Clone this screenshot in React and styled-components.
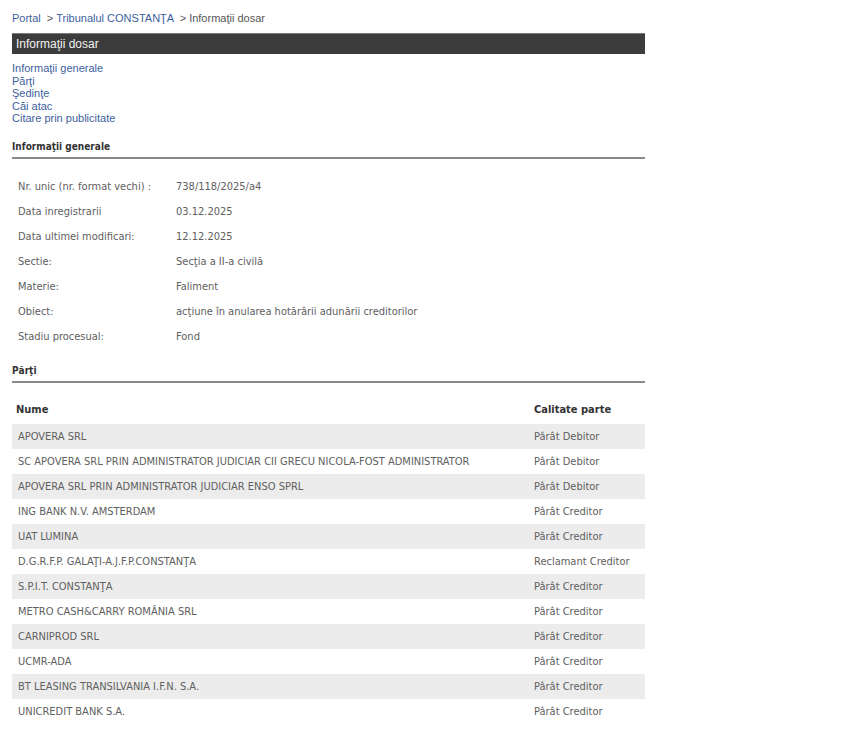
import React from 'react';
import styled, { createGlobalStyle } from 'styled-components';

const GlobalStyle = createGlobalStyle`
  body {
    margin: 0;
    background: #fff;
    font-family: "Liberation Sans", Arial, sans-serif;
  }
`
const PageStyled = styled.div`
  width: 633px;
  padding: 11px 12px 12px 12px;
`
const BreadcrumbStyled = styled.div`
  font-size: 11px;
  line-height: 14px;
  color: #555;
  white-space: pre;
`
const CrumbLinkStyled = styled.a`
  color: #3d5f9e;
  text-decoration: none;
`
const TitleBarStyled = styled.div`
  margin-top: 8px;
  height: 21px;
  line-height: 20px;
  background: #3c3c3c;
  border-top: 1px solid #7a7a7a;
  box-sizing: border-box;
  color: #f2f2f2;
  font-size: 12px;
  padding-left: 4px;
`
const LinkListStyled = styled.div`
  margin-top: 8px;
  display: flex;
  flex-direction: column;
`
const NavLinkStyled = styled.a`
  font-size: 11px;
  line-height: 12.5px;
  color: #3d5f9e;
  text-decoration: none;
`
const SectionTitleStyled = styled.div`
  margin-top: ${(p) => p.$top}px;
  font-family: "DejaVu Sans Condensed", "DejaVu Sans", sans-serif;
  font-weight: bold;
  font-size: 10px;
  line-height: 14px;
  color: #333;
  padding-bottom: 3px;
  border-bottom: 2px solid #8a8a8a;
`
const TableStyled = styled.table`
  margin-top: ${(p) => p.$top}px;
  width: 100%;
  border-collapse: collapse;
  font-family: "DejaVu Sans Condensed", "DejaVu Sans", sans-serif;
  font-size: 11px;
  color: #606060;
`
const CellStyled = styled.td`
  height: 25px;
  padding: 0 6px;
  vertical-align: middle;
  width: ${(p) => p.$width || 'auto'};
  white-space: nowrap;
`
const HeadCellStyled = styled.th`
  height: 25px;
  padding: 1px 4px 2px ${(p) => p.$left || 4}px;
  text-align: left;
  font-weight: bold;
  color: #333;
  vertical-align: middle;
  width: ${(p) => p.$width || 'auto'};
`
const StripeRowStyled = styled.tr`
  background: ${(p) => (p.$odd ? '#ececec' : '#fff')};
`

const info = [
  ['Nr. unic (nr. format vechi) :', '738/118/2025/a4'],
  ['Data inregistrarii', '03.12.2025'],
  ['Data ultimei modificari:', '12.12.2025'],
  ['Sectie:', 'Secţia a II-a civilă'],
  ['Materie:', 'Faliment'],
  ['Obiect:', 'acţiune în anularea hotărârii adunării creditorilor'],
  ['Stadiu procesual:', 'Fond'],
]

const parti = [
  ['APOVERA SRL', 'Pârât Debitor'],
  ['SC APOVERA SRL PRIN ADMINISTRATOR JUDICIAR CII GRECU NICOLA-FOST ADMINISTRATOR', 'Pârât Debitor'],
  ['APOVERA SRL PRIN ADMINISTRATOR JUDICIAR ENSO SPRL', 'Pârât Debitor'],
  ['ING BANK N.V. AMSTERDAM', 'Pârât Creditor'],
  ['UAT LUMINA', 'Pârât Creditor'],
  ['D.G.R.F.P. GALAŢI-A.J.F.P.CONSTANŢA', 'Reclamant Creditor'],
  ['S.P.I.T. CONSTANŢA', 'Pârât Creditor'],
  ['METRO CASH&CARRY ROMÂNIA SRL', 'Pârât Creditor'],
  ['CARNIPROD SRL', 'Pârât Creditor'],
  ['UCMR-ADA', 'Pârât Creditor'],
  ['BT LEASING TRANSILVANIA I.F.N. S.A.', 'Pârât Creditor'],
  ['UNICREDIT BANK S.A.', 'Pârât Creditor'],
]

const App = () => {
  return (
    <>
      <GlobalStyle />
      <PageStyled>
        <BreadcrumbStyled>
          <CrumbLinkStyled href="#">Portal</CrumbLinkStyled>{'  > '}
          <CrumbLinkStyled href="#">Tribunalul CONSTANŢA</CrumbLinkStyled>{'  > '}
          Informaţii dosar
        </BreadcrumbStyled>
        <TitleBarStyled>Informaţii dosar</TitleBarStyled>
        <LinkListStyled>
          <NavLinkStyled href="#">Informaţii generale</NavLinkStyled>
          <NavLinkStyled href="#">Părţi</NavLinkStyled>
          <NavLinkStyled href="#">Şedinţe</NavLinkStyled>
          <NavLinkStyled href="#">Căi atac</NavLinkStyled>
          <NavLinkStyled href="#">Citare prin publicitate</NavLinkStyled>
        </LinkListStyled>

        <SectionTitleStyled $top={15}>Informaţii generale</SectionTitleStyled>
        <TableStyled $top={15}>
          <tbody>
            {info.map(([label, value]) => (
              <tr key={label}>
                <CellStyled $width="146px">{label}</CellStyled>
                <CellStyled>{value}</CellStyled>
              </tr>
            ))}
          </tbody>
        </TableStyled>

        <SectionTitleStyled $top={15}>Părţi</SectionTitleStyled>
        <TableStyled $top={13}>
          <thead>
            <tr>
              <HeadCellStyled>Nume</HeadCellStyled>
              <HeadCellStyled $width="105px" $left={6}>Calitate parte</HeadCellStyled>
            </tr>
          </thead>
          <tbody>
            {parti.map(([name, role], i) => (
              <StripeRowStyled key={name} $odd={i % 2 === 0}>
                <CellStyled>{name}</CellStyled>
                <CellStyled $width="105px">{role}</CellStyled>
              </StripeRowStyled>
            ))}
          </tbody>
        </TableStyled>
      </PageStyled>
    </>
  )
}

export default App
